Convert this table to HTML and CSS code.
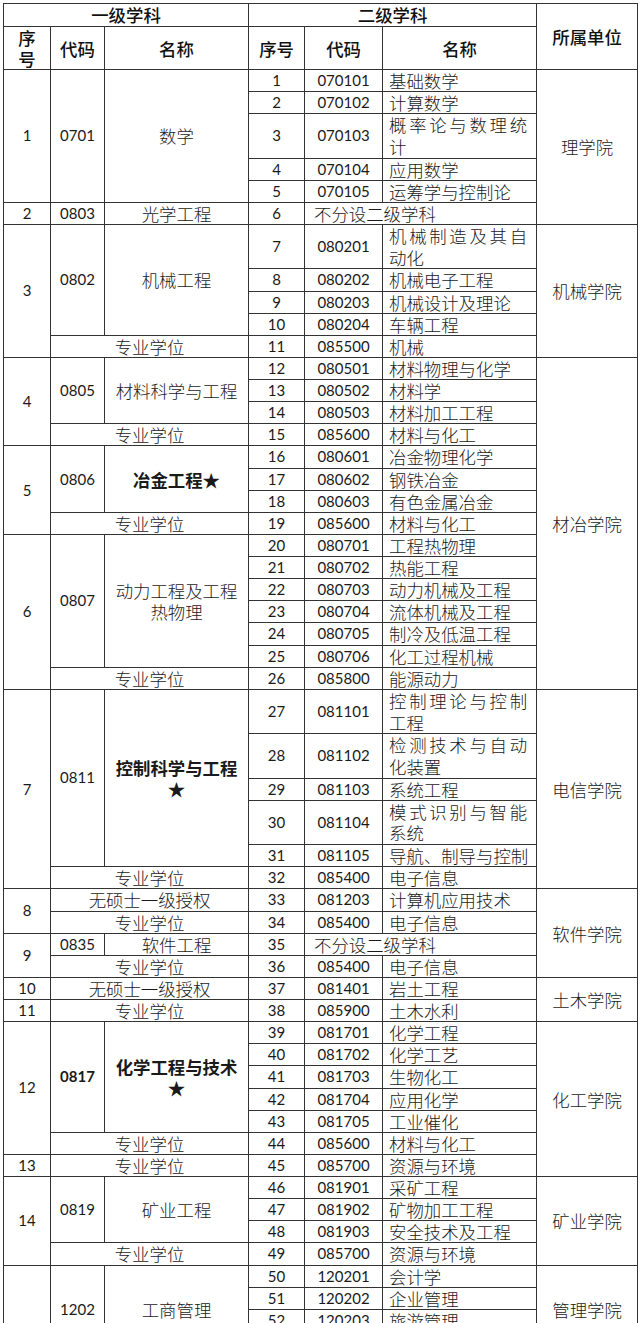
FILE: index.html
```html
<!DOCTYPE html>
<html lang="zh-CN">
<head>
<meta charset="utf-8">
<title>学科目录</title>
<link rel="stylesheet" href="styles.css">
</head>
<body>
<table class="t">
<colgroup><col class="w1"><col class="w2"><col class="w3"><col class="w4"><col class="w5"><col class="w6"><col class="w7"></colgroup>
<thead>
<tr class="h1"><th colspan="3">一级学科</th><th colspan="3">二级学科</th><th rowspan="2">所属单位</th></tr>
<tr class="h2"><th>序<br>号</th><th>代码</th><th>名称</th><th>序号</th><th>代码</th><th>名称</th></tr>
</thead>
<tbody>
<tr><td rowspan="5">1</td><td rowspan="5">0701</td><td rowspan="5" class="z">数学</td><td>1</td><td>070101</td><td class="n">基础数学</td><td rowspan="6" class="z">理学院</td></tr>
<tr><td>2</td><td>070102</td><td class="n">计算数学</td></tr>
<tr><td>3</td><td>070103</td><td class="n two"><span class="j">概率论与数理统</span>计</td></tr>
<tr><td>4</td><td>070104</td><td class="n">应用数学</td></tr>
<tr><td>5</td><td>070105</td><td class="n">运筹学与控制论</td></tr>
<tr><td>2</td><td>0803</td><td class="z">光学工程</td><td>6</td><td colspan="2" class="n ns">不分设二级学科</td></tr>

<tr><td rowspan="5">3</td><td rowspan="4">0802</td><td rowspan="4" class="z">机械工程</td><td>7</td><td>080201</td><td class="n two"><span class="j">机械制造及其自</span>动化</td><td rowspan="5" class="z">机械学院</td></tr>
<tr><td>8</td><td>080202</td><td class="n">机械电子工程</td></tr>
<tr><td>9</td><td>080203</td><td class="n">机械设计及理论</td></tr>
<tr><td>10</td><td>080204</td><td class="n">车辆工程</td></tr>
<tr><td colspan="2" class="z">专业学位</td><td>11</td><td>085500</td><td class="n">机械</td></tr>

<tr><td rowspan="4">4</td><td rowspan="3">0805</td><td rowspan="3" class="z">材料科学与工程</td><td>12</td><td>080501</td><td class="n">材料物理与化学</td><td rowspan="15" class="z">材冶学院</td></tr>
<tr><td>13</td><td>080502</td><td class="n">材料学</td></tr>
<tr><td>14</td><td>080503</td><td class="n">材料加工工程</td></tr>
<tr><td colspan="2" class="z">专业学位</td><td>15</td><td>085600</td><td class="n">材料与化工</td></tr>

<tr><td rowspan="4">5</td><td rowspan="3">0806</td><td rowspan="3" class="z b">冶金工程★</td><td>16</td><td>080601</td><td class="n">冶金物理化学</td></tr>
<tr><td>17</td><td>080602</td><td class="n">钢铁冶金</td></tr>
<tr><td>18</td><td>080603</td><td class="n">有色金属冶金</td></tr>
<tr><td colspan="2" class="z">专业学位</td><td>19</td><td>085600</td><td class="n">材料与化工</td></tr>

<tr><td rowspan="7">6</td><td rowspan="6">0807</td><td rowspan="6" class="z">动力工程及工程<br>热物理</td><td>20</td><td>080701</td><td class="n">工程热物理</td></tr>
<tr><td>21</td><td>080702</td><td class="n">热能工程</td></tr>
<tr><td>22</td><td>080703</td><td class="n">动力机械及工程</td></tr>
<tr><td>23</td><td>080704</td><td class="n">流体机械及工程</td></tr>
<tr><td>24</td><td>080705</td><td class="n">制冷及低温工程</td></tr>
<tr><td>25</td><td>080706</td><td class="n">化工过程机械</td></tr>
<tr><td colspan="2" class="z">专业学位</td><td>26</td><td>085800</td><td class="n">能源动力</td></tr>

<tr><td rowspan="6">7</td><td rowspan="5">0811</td><td rowspan="5" class="z b">控制科学与工程<br>★</td><td>27</td><td>081101</td><td class="n two"><span class="j">控制理论与控制</span>工程</td><td rowspan="6" class="z">电信学院</td></tr>
<tr><td>28</td><td>081102</td><td class="n two"><span class="j">检测技术与自动</span>化装置</td></tr>
<tr><td>29</td><td>081103</td><td class="n">系统工程</td></tr>
<tr><td>30</td><td>081104</td><td class="n two"><span class="j">模式识别与智能</span>系统</td></tr>
<tr><td>31</td><td>081105</td><td class="n">导航、制导与控制</td></tr>
<tr><td colspan="2" class="z">专业学位</td><td>32</td><td>085400</td><td class="n">电子信息</td></tr>

<tr><td rowspan="2">8</td><td colspan="2" class="z">无硕士一级授权</td><td>33</td><td>081203</td><td class="n">计算机应用技术</td><td rowspan="4" class="z">软件学院</td></tr>
<tr><td colspan="2" class="z">专业学位</td><td>34</td><td>085400</td><td class="n">电子信息</td></tr>
<tr><td rowspan="2">9</td><td>0835</td><td class="z">软件工程</td><td>35</td><td colspan="2" class="n ns">不分设二级学科</td></tr>
<tr><td colspan="2" class="z">专业学位</td><td>36</td><td>085400</td><td class="n">电子信息</td></tr>

<tr><td>10</td><td colspan="2" class="z">无硕士一级授权</td><td>37</td><td>081401</td><td class="n">岩土工程</td><td rowspan="2" class="z">土木学院</td></tr>
<tr><td>11</td><td colspan="2" class="z">专业学位</td><td>38</td><td>085900</td><td class="n">土木水利</td></tr>

<tr><td rowspan="6">12</td><td rowspan="5" class="b">0817</td><td rowspan="5" class="z b">化学工程与技术<br>★</td><td>39</td><td>081701</td><td class="n">化学工程</td><td rowspan="7" class="z">化工学院</td></tr>
<tr><td>40</td><td>081702</td><td class="n">化学工艺</td></tr>
<tr><td>41</td><td>081703</td><td class="n">生物化工</td></tr>
<tr><td>42</td><td>081704</td><td class="n">应用化学</td></tr>
<tr><td>43</td><td>081705</td><td class="n">工业催化</td></tr>
<tr><td colspan="2" class="z">专业学位</td><td>44</td><td>085600</td><td class="n">材料与化工</td></tr>
<tr><td>13</td><td colspan="2" class="z">专业学位</td><td>45</td><td>085700</td><td class="n">资源与环境</td></tr>

<tr><td rowspan="4">14</td><td rowspan="3">0819</td><td rowspan="3" class="z">矿业工程</td><td>46</td><td>081901</td><td class="n">采矿工程</td><td rowspan="4" class="z">矿业学院</td></tr>
<tr><td>47</td><td>081902</td><td class="n">矿物加工工程</td></tr>
<tr><td>48</td><td>081903</td><td class="n">安全技术及工程</td></tr>
<tr><td colspan="2" class="z">专业学位</td><td>49</td><td>085700</td><td class="n">资源与环境</td></tr>

<tr><td rowspan="6">15</td><td rowspan="4">1202</td><td rowspan="4" class="z">工商管理</td><td>50</td><td>120201</td><td class="n">会计学</td><td rowspan="4" class="z">管理学院</td></tr>
<tr><td>51</td><td>120202</td><td class="n">企业管理</td></tr>
<tr><td>52</td><td>120203</td><td class="n">旅游管理</td></tr>
<tr><td>53</td><td>120204</td><td class="n">技术经济及管理</td></tr>
<tr><td colspan="2" class="z">专业学位</td><td>54</td><td>125100</td><td class="n">工商管理</td><td rowspan="2" class="z">管理学院</td></tr>
<tr><td colspan="2" class="z">专业学位</td><td>55</td><td>125300</td><td class="n">会计</td></tr>
</tbody>
</table>
</body>
</html>
```

FILE: styles.css
```css
html, body {
  margin: 0;
  padding: 0;
  background: #ffffff;
}

body {
  font-family: "Lato", "Noto Sans CJK SC", sans-serif;
  color: #1a1a1a;
}

.t {
  border-collapse: collapse;
  table-layout: fixed;
  width: 634px;
  margin: 3px 0 0 3px;
  font-size: 15px;
}

.w1 { width: 47px; }
.w2 { width: 54px; }
.w3 { width: 144px; }
.w4 { width: 56px; }
.w5 { width: 78px; }
.w6 { width: 154px; }
.w7 { width: 101px; }

.t th,
.t td {
  border: 1px solid #333333;
  padding: 0;
  text-align: center;
  vertical-align: middle;
  line-height: 21.12px;
  font-weight: 400;
  white-space: nowrap;
}

.t th {
  font-family: "Noto Sans CJK SC", sans-serif;
  font-size: 17.4px;
  font-weight: 500;
  color: #111111;
}

.h1 th {
  line-height: 22px;
}

.h2 th {
  line-height: 21px;
}

.t td.z,
.t td.n {
  font-family: "Noto Sans CJK SC", sans-serif;
  font-size: 17.4px;
  font-weight: 300;
}

.t td.n {
  text-align: left;
  padding: 0 9px 0 6px;
}

.t td.two {
  line-height: 21.7px;
}

.t td.ns {
  padding-left: 9px;
}

.j {
  display: block;
  text-align: justify;
  text-align-last: justify;
}

.t td.b {
  font-weight: 700;
}
```
